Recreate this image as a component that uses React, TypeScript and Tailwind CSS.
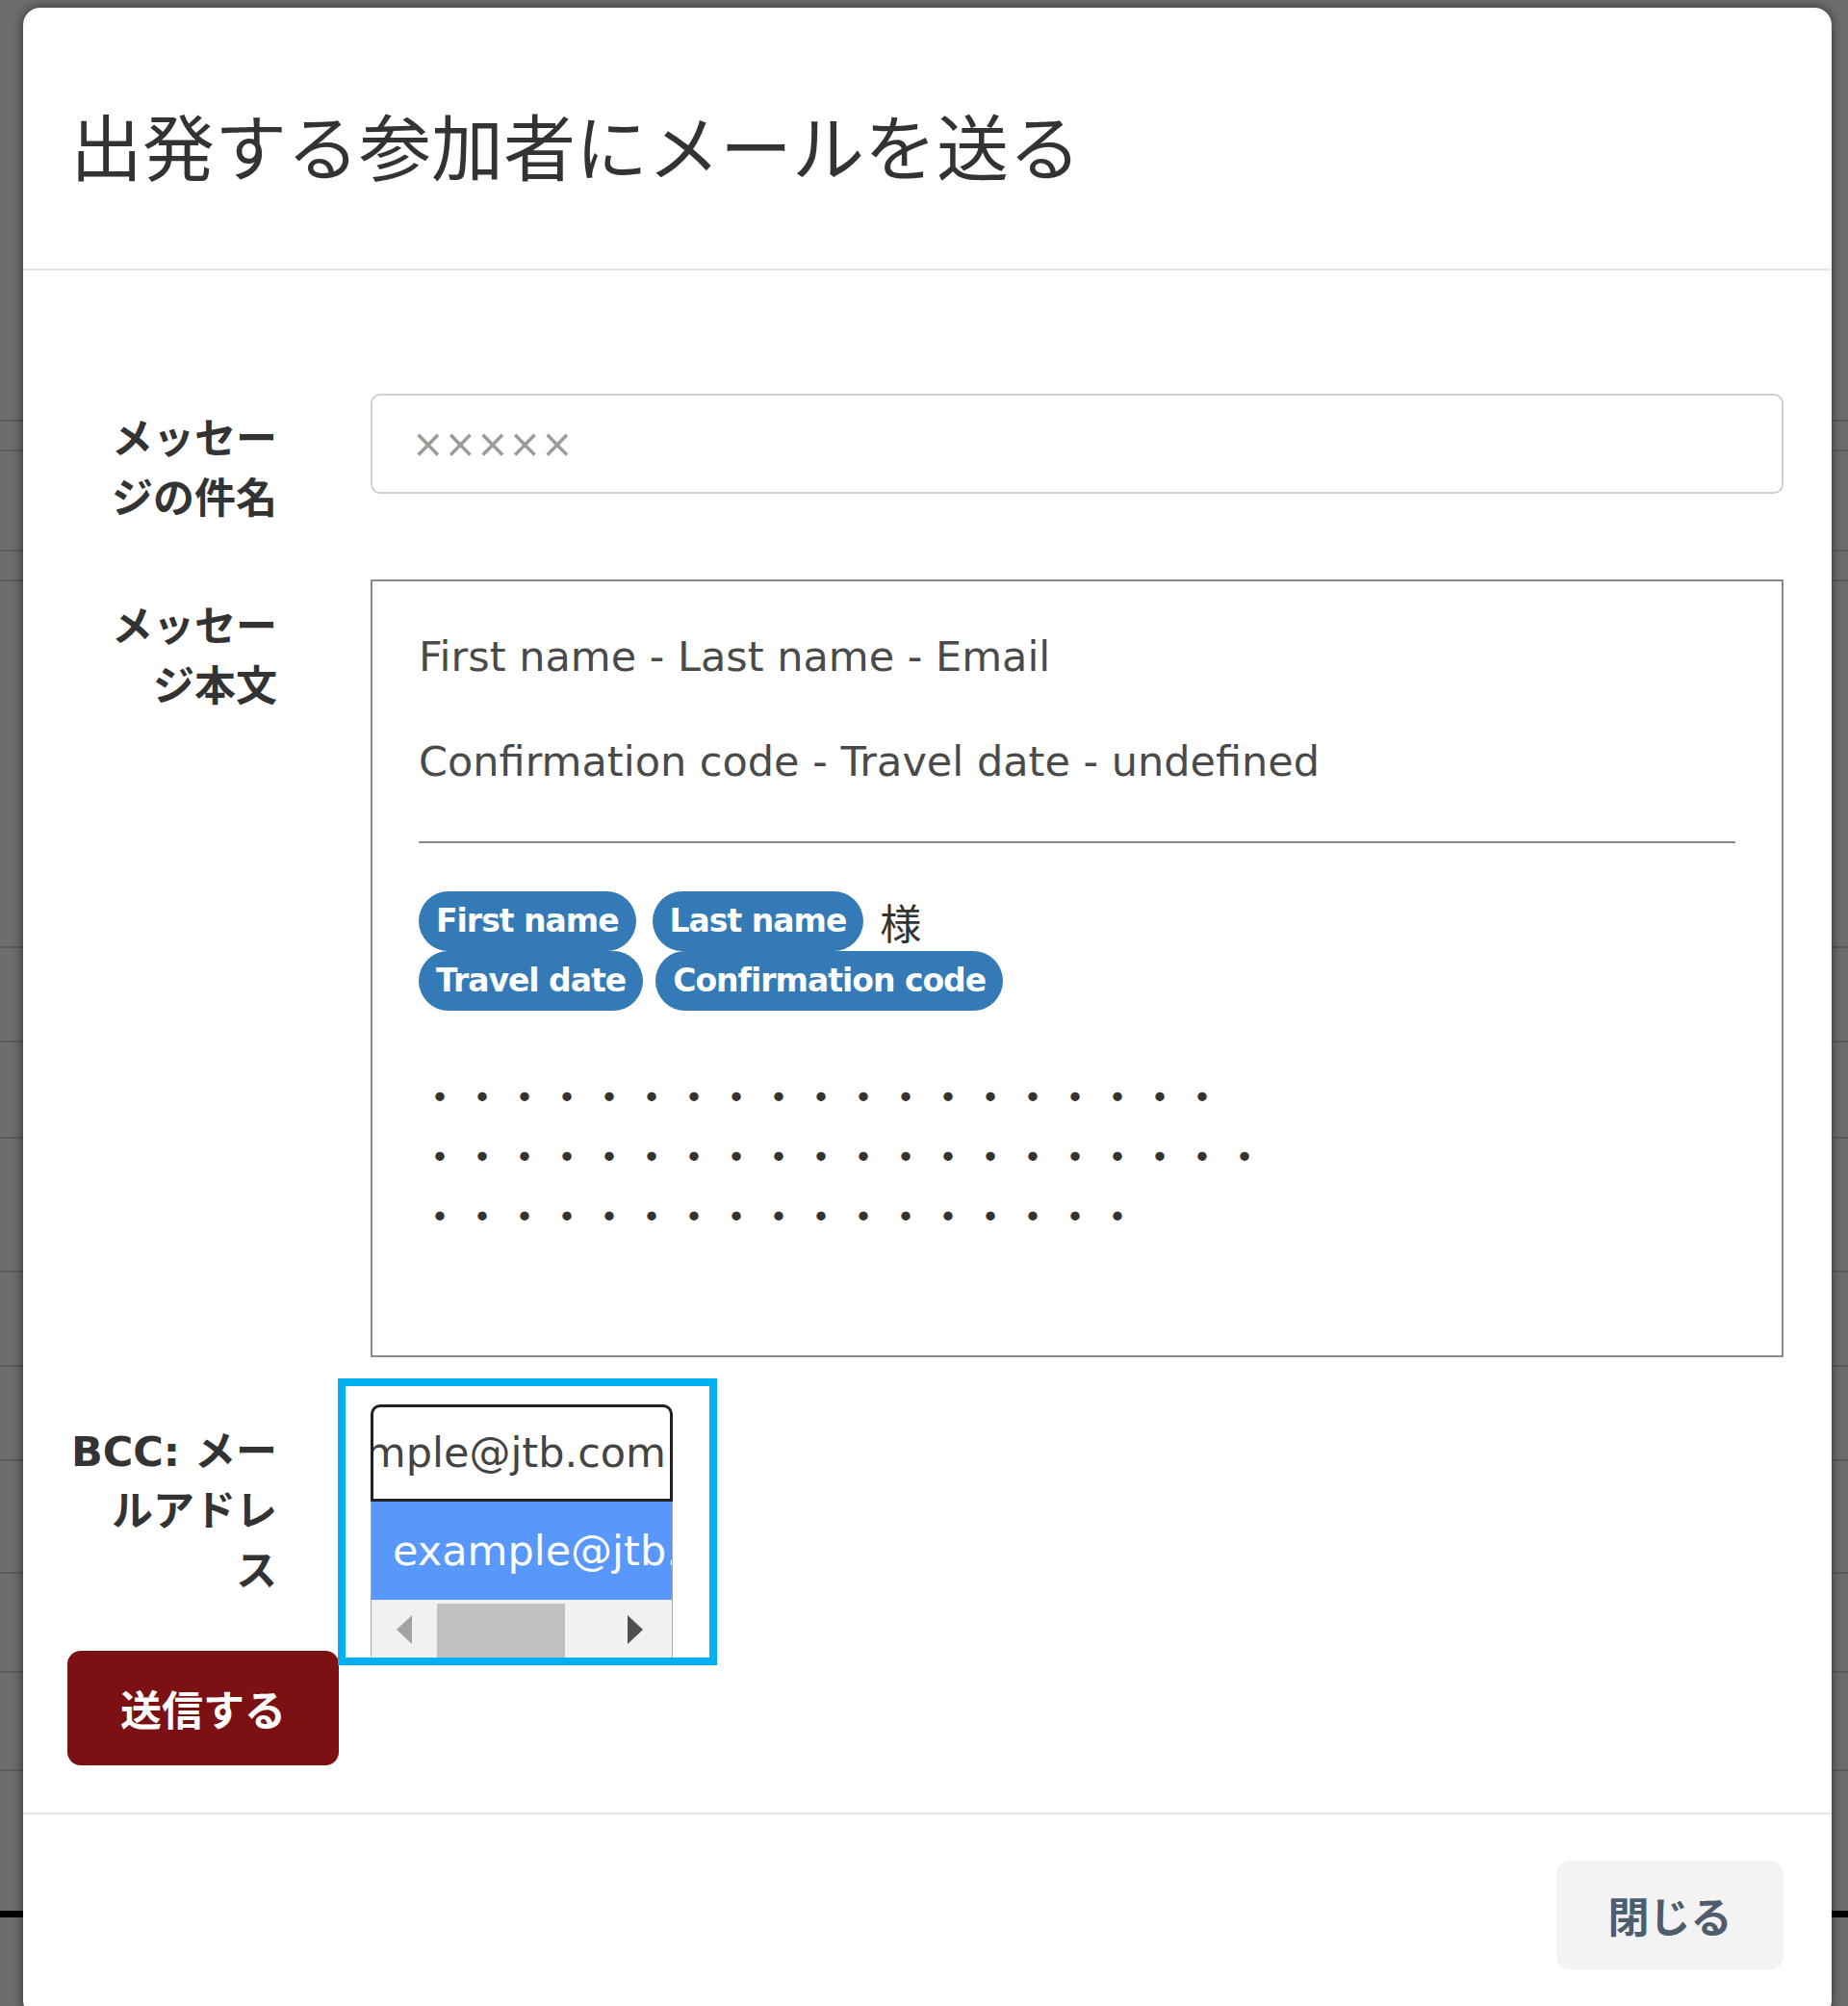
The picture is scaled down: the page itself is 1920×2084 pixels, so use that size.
const bgLines = [438, 469, 573, 604, 985, 1083, 1183, 1322, 1420, 1518, 1635, 1738, 1840];

const chip =
  "inline-flex h-[62px] items-center rounded-full bg-[#337ab7] px-[18px] font-['DejaVu_Sans',sans-serif] text-[33px] font-bold tracking-[-1px] text-white";

const labelCls =
  "w-[315px] shrink-0 pr-[97px] text-right font-['DejaVu_Sans','Noto_Sans_CJK_JP',sans-serif] text-[43px] font-bold leading-[62px] text-[#333]";

function Backdrop() {
  return (
    <div className="flex flex-col">
      {bgLines.map((y, i) => (
        <div
          key={y}
          className="border-b-2 border-[#5c5c5c]"
          style={{ height: y - (i === 0 ? 0 : bgLines[i - 1]) }}
        />
      ))}
      <div className="h-[145px]" />
      <div className="h-[7px] bg-black" />
    </div>
  );
}

function BccField() {
  return (
    <div className="relative w-[314px] shrink-0 self-start">
      {/* search input of the dropdown, scrolled to the end */}
      <div className="flex h-[101px] items-center justify-end overflow-hidden rounded-t-[10px] border-[3px] border-[#222] bg-white pr-[4px]">
        <span className="whitespace-nowrap font-['DejaVu_Sans',sans-serif] text-[43px] text-[#444]">example@jtb.com</span>
      </div>

      {/* results list */}
      <div className="absolute left-0 top-[101px] w-full border-x border-[#aaa] bg-white">
        <div className="flex h-[102px] items-center overflow-hidden bg-[#5897fb] pl-[22px]">
          <span className="whitespace-nowrap font-['DejaVu_Sans',sans-serif] text-[43px] text-white">example@jtb.com</span>
        </div>
        <div className="flex h-[62px] items-center bg-[#f1f1f1]">
          <div className="flex w-[68px] justify-center">
            <svg width="16" height="30" viewBox="0 0 16 30">
              <path d="M16 0 L0 15 L16 30 Z" fill="#a3a3a3" />
            </svg>
          </div>
          <div className="h-[58px] w-[133px] self-end bg-[#c1c1c1]" />
          <div className="flex flex-1 justify-end pr-[30px]">
            <svg width="16" height="30" viewBox="0 0 16 30">
              <path d="M0 0 L16 15 L0 30 Z" fill="#505050" />
            </svg>
          </div>
        </div>
      </div>

      {/* highlight frame */}
      <div className="pointer-events-none absolute left-[-34px] top-[-27px] z-10 h-[298px] w-[394px] border-[8px] border-[#00b0f0]" />
    </div>
  );
}

export default function App() {
  return (
    <div className="relative h-[2084px] w-full overflow-hidden bg-[#6d6d6d] font-['Noto_Sans_CJK_JP',sans-serif]">
      <Backdrop />

      <div className="absolute left-[24px] top-[8px] w-[1879px] rounded-[18px] bg-white shadow-[0_0_12px_rgba(0,0,0,0.55)]">
        {/* Header */}
        <div className="flex h-[273px] items-center border-b-2 border-[#e5e5e5] pl-[49px] pt-[12px]">
          <h4 className="text-[75px] font-normal leading-none text-[#333]">出発する参加者にメールを送る</h4>
        </div>

        {/* Body */}
        <div className="pb-[49px] pl-[46px] pr-[50px] pt-[128px]">
          {/* Subject */}
          <div className="mb-[53px] flex">
            <label className={`${labelCls} pt-[16px]`}>
              メッセー
              <br />
              ジの件名
            </label>
            <input
              className="h-[104px] flex-1 rounded-[10px] border-2 border-[#d0d0d0] pl-[41px] font-['DejaVu_Sans',sans-serif] text-[40px] text-[#333] outline-none placeholder:text-[#9a9a9a]"
              placeholder="×××××"
            />
          </div>

          {/* Body text */}
          <div className="mb-[49px] flex">
            <label className={`${labelCls} pt-[18px]`}>
              メッセー
              <br />
              ジ本文
            </label>
            <div className="h-[808px] flex-1 border-2 border-[#8a8a8a] px-[48px] pt-[47px] font-['DejaVu_Sans','Noto_Sans_CJK_JP',sans-serif] text-[43px] leading-[62px] text-[#4a4a4a]">
              <p className="mb-[47px]">First name - Last name - Email</p>
              <p>Confirmation code - Travel date - undefined</p>
              <hr className="mb-[50px] mt-[52px] border-t-2 border-[#8a8a8a]" />
              <div className="flex items-center gap-[17px]">
                <span className={chip}>First name</span>
                <span className={chip}>Last name</span>
                <span className="font-['Noto_Sans_CJK_JP',sans-serif] text-[#333]">様</span>
              </div>
              <div className="flex items-center gap-[13px]">
                <span className={chip}>Travel date</span>
                <span className={chip}>Confirmation code</span>
              </div>
              <div className="mt-[56px] font-['Noto_Sans_CJK_JP',sans-serif] text-[44px] text-[#333]">
                <p>・・・・・・・・・・・・・・・・・・・</p>
                <p>・・・・・・・・・・・・・・・・・・・・</p>
                <p>・・・・・・・・・・・・・・・・・</p>
              </div>
            </div>
          </div>

          {/* BCC */}
          <div className="flex">
            <label className={`${labelCls} pt-[18px]`}>
              BCC: メー
              <br />
              ルアドレ
              <br />
              ス
            </label>
            <BccField />
          </div>

          <button className="mt-[52px] flex h-[119px] w-[282px] items-center justify-center rounded-[14px] bg-[#7b1113] text-[43px] font-bold text-white">
            送信する
          </button>
        </div>

        {/* Footer */}
        <div className="flex justify-end border-t-2 border-[#e5e5e5] pb-[50px] pr-[50px] pt-[48px]">
          <button className="flex h-[113px] w-[236px] items-center justify-center rounded-[14px] bg-[#f3f3f3] text-[43px] font-bold text-[#4e5d6c]">
            閉じる
          </button>
        </div>
      </div>
    </div>
  );
}
